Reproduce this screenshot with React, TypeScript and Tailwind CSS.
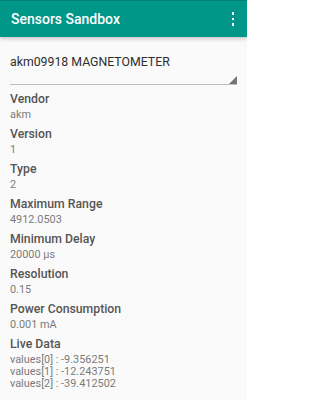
const fields = [
  { label: "Vendor", values: ["akm"] },
  { label: "Version", values: ["1"] },
  { label: "Type", values: ["2"] },
  { label: "Maximum Range", values: ["4912.0503"] },
  { label: "Minimum Delay", values: ["20000 µs"] },
  { label: "Resolution", values: ["0.15"] },
  { label: "Power Consumption", values: ["0.001 mA"] },
  {
    label: "Live Data",
    values: ["values[0] : -9.356251", "values[1] : -12.243751", "values[2] : -39.412502"],
  },
];

export default function App() {
  return (
    <div className="h-[400px] w-[247px] overflow-hidden bg-[#fafafa] font-['Roboto',sans-serif]">
      <div className="relative z-10 flex h-[37px] items-center justify-between border-t border-[#00806f] bg-[#009688] pl-[11px] pr-[13px] shadow-[0_2px_4px_rgba(0,0,0,0.2)]">
        <h1 className="text-[14px] font-medium text-white">Sensors Sandbox</h1>
        <div className="flex flex-col gap-[3px]">
          <span className="h-[2.5px] w-[2.5px] bg-white" />
          <span className="h-[2.5px] w-[2.5px] bg-white" />
          <span className="h-[2.5px] w-[2.5px] bg-white" />
        </div>
      </div>

      <div className="px-[10px]">
        <div className="relative mt-[17px] border-b border-[#bdbdbd] pb-[14px]">
          <p className="text-[12.3px] leading-[16px] text-[#2e2e2e]">akm09918 MAGNETOMETER</p>
          <svg className="absolute bottom-0 right-0 h-[8px] w-[8px]" viewBox="0 0 8 8">
            <polygon points="8,0 8,8 0,8" fill="#757575" />
          </svg>
        </div>

        <div className="mt-[6px] flex flex-col gap-[5px]">
          {fields.map((field) => (
            <div key={field.label}>
              <p className="text-[12.25px] font-medium leading-[16px] text-[#555555]">{field.label}</p>
              <div className="mt-[2px]">
                {field.values.map((value) => (
                  <p key={value} className="text-[10.9px] leading-[12px] text-[#7a7a7a]">
                    {value}
                  </p>
                ))}
              </div>
            </div>
          ))}
        </div>
      </div>
    </div>
  );
}
